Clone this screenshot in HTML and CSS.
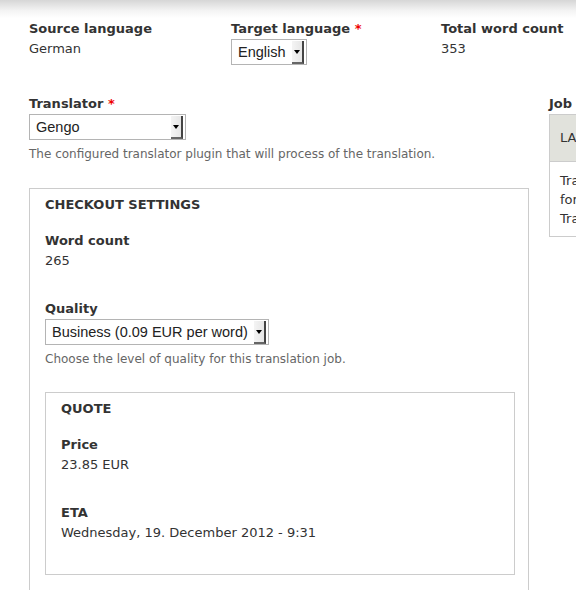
FILE: index.html
```html
<!DOCTYPE html>
<html>
<head>
<meta charset="utf-8">
<link rel="stylesheet" href="styles.css">
</head>
<body>
<div class="shadow"></div>
<div class="page">
  <div class="toprow">
    <div class="item">
      <div class="label">Source language</div>
      <div class="value">German</div>
    </div>
    <div class="item">
      <div class="label">Target language <span class="req">*</span></div>
      <div class="select"><span class="sel-text">English</span><span class="btn"><span class="arrow"></span></span></div>
    </div>
    <div class="item">
      <div class="label">Total word count</div>
      <div class="value">353</div>
    </div>
  </div>

  <div class="mainrow">
    <div class="leftcol">
      <div class="item">
        <div class="label">Translator <span class="req">*</span></div>
        <div class="select sel-wide"><span class="sel-text">Gengo</span><span class="btn"><span class="arrow"></span></span></div>
        <div class="desc">The configured translator plugin that will process of the translation.</div>
      </div>

      <div class="fieldset">
        <div class="legend">Checkout settings</div>
        <div class="fitem">
          <div class="label">Word count</div>
          <div class="value">265</div>
        </div>
        <div class="fitem">
          <div class="label">Quality</div>
          <div class="select"><span class="sel-text">Business (0.09 EUR per word)</span><span class="btn"><span class="arrow"></span></span></div>
          <div class="desc">Choose the level of quality for this translation job.</div>
        </div>

        <div class="fieldset inner">
          <div class="legend">Quote</div>
          <div class="fitem">
            <div class="label">Price</div>
            <div class="value">23.85 EUR</div>
          </div>
          <div class="fitem">
            <div class="label">ETA</div>
            <div class="value">Wednesday, 19. December 2012 - 9:31</div>
          </div>
        </div>
      </div>
    </div>

    <div class="rightcol">
      <div class="label">Job items</div>
      <div class="table">
        <div class="thead">LABEL</div>
        <div class="tbody">
          <div>Translation</div>
          <div>for German</div>
          <div>Translation</div>
        </div>
      </div>
    </div>
  </div>
</div>
</body>
</html>
```

FILE: styles.css
```css
html, body {
  margin: 0;
  padding: 0;
  background: #fff;
  overflow: hidden;
}
body {
  width: 576px;
  height: 590px;
  font-family: "DejaVu Sans", Verdana, sans-serif;
  font-size: 13px;
  line-height: 20px;
  color: #333;
}
.shadow {
  height: 18px;
  background: linear-gradient(#d6d6d6, #f4f4f4 60%, #fff);
}
.page {
  padding-top: 1px;
  padding-left: 29px;
}
.toprow {
  display: flex;
}
.toprow .item:nth-child(1) { width: 202px; }
.toprow .item:nth-child(2) { width: 210px; }
.toprow .item:nth-child(3) { width: 135px; }
.label {
  font-weight: bold;
  white-space: nowrap;
}
.req {
  color: #e00;
}
.value {
  white-space: nowrap;
}
.select {
  display: inline-flex;
  align-items: center;
  box-sizing: border-box;
  height: 26px;
  border: 1px solid #b4b4b4;
  background: #fff;
  font-family: "Liberation Sans", Arial, sans-serif;
  font-size: 14.5px;
  color: #222;
  padding-left: 6px;
  white-space: nowrap;
}
.sel-wide {
  width: 157px;
  justify-content: space-between;
}
.btn {
  box-sizing: border-box;
  display: flex;
  align-items: center;
  justify-content: center;
  width: 12px;
  height: 23px;
  margin-left: 6px;
  margin-right: 2px;
  background: linear-gradient(90deg, #f4f4f4, #e6e6e6);
  border-right: 2px solid #444;
  border-bottom: 2px solid #666;
}
.arrow {
  width: 0;
  height: 0;
  border-left: 3px solid transparent;
  border-right: 3px solid transparent;
  border-top: 4px solid #000;
  margin-top: 2px;
}
.mainrow {
  display: flex;
  margin-top: 29px;
  gap: 20px;
}
.leftcol {
  width: 500px;
  flex: none;
}
.desc {
  font-size: 12px;
  line-height: 16px;
  color: #666;
  margin-top: 6px;
  white-space: nowrap;
}
.fieldset {
  margin-top: 26px;
  border: 1px solid #ccc;
  padding: 6px 13px 30px 15px;
  height: 500px;
}
.legend {
  font-weight: bold;
  text-transform: uppercase;
  margin-bottom: 16px;
}
.fitem + .fitem {
  margin-top: 28px;
}
.fieldset.inner {
  margin-top: 25px;
  height: auto;
  padding-bottom: 31px;
}
.rightcol {
  flex: none;
  width: 200px;
}
.table {
  border: 1px solid #ccc;
  border-right: none;
}
.thead {
  background: #e1e2dc;
  height: 46px;
  line-height: 46px;
  padding-left: 10px;
  border-bottom: 1px solid #ccc;
}
.tbody {
  padding: 9px 10px 8px;
  line-height: 19px;
}
```
